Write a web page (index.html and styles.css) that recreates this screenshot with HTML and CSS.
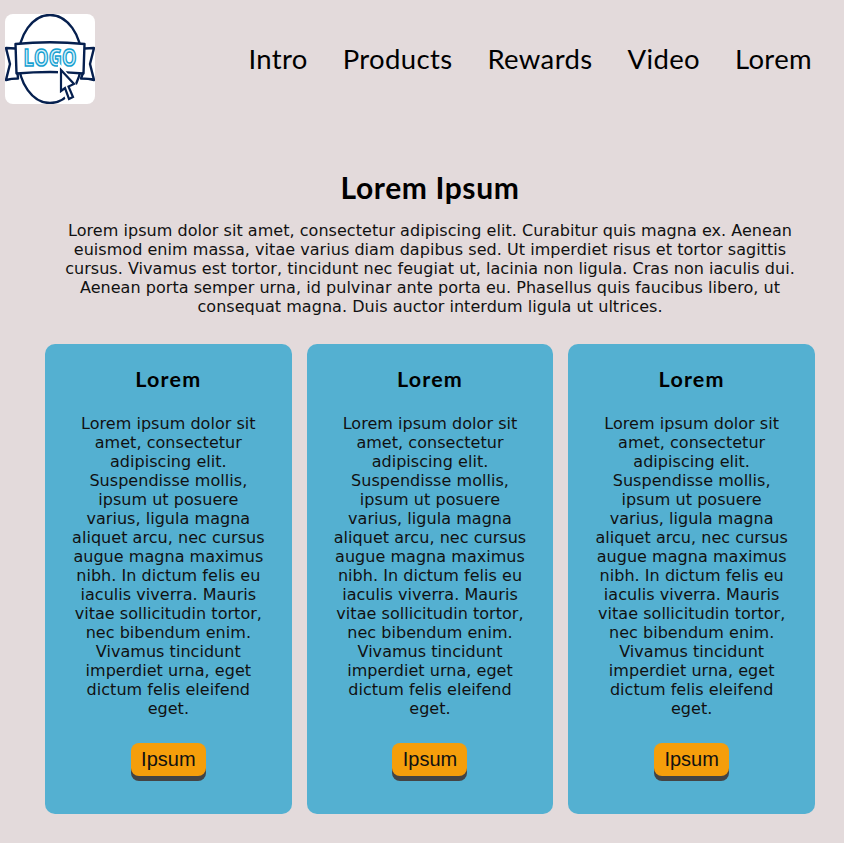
FILE: index.html
```html
<!DOCTYPE html>
<html lang="en">
<head>
<meta charset="utf-8">
<title>Lorem Ipsum</title>
<link rel="stylesheet" href="styles.css">
</head>
<body>
<header class="header">
  <svg class="logo" viewBox="0 0 90 90" role="img" aria-label="Logo">
    <g fill="#fff" stroke="#06204f" stroke-width="2.400" stroke-linejoin="round">
      <ellipse cx="45" cy="45" rx="31.500" ry="44"/>
      <path d="M10.500 34.500L1 34L5 50L1 66Q6 64.500 13 64.500L12.500 59M79.500 34.500L89 34L85 50L89 66Q84 64.500 76 64.500L78 59"/>
      <path d="M10.500 30Q45 26.500 79.500 30L78.500 59.500Q45 56.500 11.500 59.500Z"/>
    </g>
    <g class="logo-text" transform="translate(45 51.500) scale(.76 1)">
      <text x="0" y="0" text-anchor="middle" textLength="70" lengthAdjust="spacing">LOGO</text>
    </g>
    <path d="M56 56V77.500L59.500 74.500L64 85.500L68 83.500L64.500 73H69.500Z" fill="#fff" stroke="#fff" stroke-width="6"/>
    <path d="M56 56V77L60 74L64 85L68 83L63.500 72.500L69 70Z" fill="#fff" stroke="#06204f" stroke-width="2.200"/>
  </svg>
  <nav class="nav">
    <a>Intro</a><a>Products</a><a>Rewards</a><a>Video</a><a>Lorem</a>
  </nav>
</header>
<main class="main">
  <section class="intro">
    <h1>Lorem Ipsum</h1>
    <p>Lorem ipsum dolor sit amet, consectetur adipiscing elit. Curabitur quis magna ex. Aenean<br>euismod enim massa, vitae varius diam dapibus sed. Ut imperdiet risus et tortor sagittis<br>cursus. Vivamus est tortor, tincidunt nec feugiat ut, lacinia non ligula. Cras non iaculis dui.<br>Aenean porta semper urna, id pulvinar ante porta eu. Phasellus quis faucibus libero, ut<br>consequat magna. Duis auctor interdum ligula ut ultrices.</p>
  </section>
  <section class="cards">
    <article class="card">
      <h2>Lorem</h2>
      <p>Lorem ipsum dolor sit<br>amet, consectetur<br>adipiscing elit.<br>Suspendisse mollis,<br>ipsum ut posuere<br>varius, ligula magna<br>aliquet arcu, nec cursus<br>augue magna maximus<br>nibh. In dictum felis eu<br>iaculis viverra. Mauris<br>vitae sollicitudin tortor,<br>nec bibendum enim.<br>Vivamus tincidunt<br>imperdiet urna, eget<br>dictum felis eleifend<br>eget.</p>
      <button>Ipsum</button>
    </article>
    <article class="card">
      <h2>Lorem</h2>
      <p>Lorem ipsum dolor sit<br>amet, consectetur<br>adipiscing elit.<br>Suspendisse mollis,<br>ipsum ut posuere<br>varius, ligula magna<br>aliquet arcu, nec cursus<br>augue magna maximus<br>nibh. In dictum felis eu<br>iaculis viverra. Mauris<br>vitae sollicitudin tortor,<br>nec bibendum enim.<br>Vivamus tincidunt<br>imperdiet urna, eget<br>dictum felis eleifend<br>eget.</p>
      <button>Ipsum</button>
    </article>
    <article class="card">
      <h2>Lorem</h2>
      <p>Lorem ipsum dolor sit<br>amet, consectetur<br>adipiscing elit.<br>Suspendisse mollis,<br>ipsum ut posuere<br>varius, ligula magna<br>aliquet arcu, nec cursus<br>augue magna maximus<br>nibh. In dictum felis eu<br>iaculis viverra. Mauris<br>vitae sollicitudin tortor,<br>nec bibendum enim.<br>Vivamus tincidunt<br>imperdiet urna, eget<br>dictum felis eleifend<br>eget.</p>
      <button>Ipsum</button>
    </article>
  </section>
</main>
</body>
</html>
```
FILE: styles.css
```css
* { box-sizing: border-box; }
body {
  margin: 0;
  min-height: 843px;
  background: #e3dadb;
  color: #000;
  font: 16px/19px "DejaVu Sans", sans-serif;
}
h1, h2, p { margin: 0; }
.header {
  display: flex;
  justify-content: space-between;
  align-items: center;
  height: 118px;
  padding: 0 32px 0 5px;
}
.logo {
  width: 90px;
  height: 90px;
  background: #fff;
  border-radius: 8px;
}
.logo-text {
  font: bold 24px "Open Sans", sans-serif;
  fill: #d5f1fb;
  stroke: #149fd0;
  stroke-width: 1.6px;
}
.nav {
  display: flex;
  gap: 35px;
  font: 27.5px/36px Lato, sans-serif;
  letter-spacing: 0.35px;
}
.main { padding: 53px 29px 0 45px; }
.intro { text-align: center; }
.intro h1 {
  margin-bottom: 17px;
  font: 700 30px/33px Lato, sans-serif;
  letter-spacing: 0.6px;
}
.intro p, .card p {
  white-space: nowrap;
  letter-spacing: 0.04px;
  color: #111;
}
.cards {
  display: grid;
  grid-template-columns: repeat(3, 1fr);
  gap: 15px;
  margin-top: 28px;
}
.card {
  display: flex;
  flex-direction: column;
  align-items: center;
  height: 470px;
  padding-top: 20px;
  border-radius: 10px;
  background: #54b0d1;
  text-align: center;
}
.card h2 {
  margin-bottom: 20px;
  font: 700 21.5px/30px Lato, sans-serif;
  letter-spacing: 1.2px;
}
.card button {
  width: 75px;
  height: 33px;
  margin-top: 25px;
  padding: 0;
  border: 0;
  border-radius: 8px;
  background: #f59e0b;
  box-shadow: 0 5px #444;
  color: #111;
  font: 20px/33px "Liberation Sans", sans-serif;
}
```
